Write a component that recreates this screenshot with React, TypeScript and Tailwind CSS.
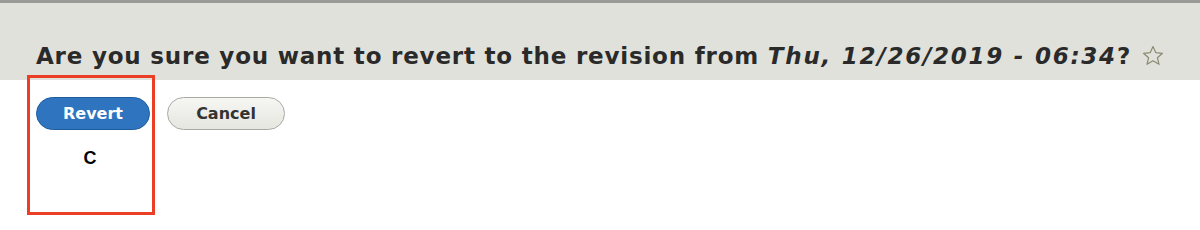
export default function App() {
  return (
    <div className="relative h-[230px] w-[1200px] overflow-hidden bg-white font-['DejaVu_Sans',sans-serif]">
      {/* Page title bar */}
      <div className="h-[80px] border-t-[3px] border-[#9a9a96] bg-[#e1e1db] px-[36px] pt-[39px]">
        <h1 className="flex items-center whitespace-nowrap text-[23px] font-bold leading-[28px] tracking-[0.8px] text-[#2a2a2a]">
          <span>
            Are you sure you want to revert to the revision from{' '}
            <em className="tracking-[1.75px]">Thu, 12/26/2019 - 06:34</em>?
          </span>
          <svg className="ml-[10px] h-[24px] w-[24px] shrink-0" viewBox="0 0 24 24" fill="none" stroke="#8a8a72" strokeWidth="1.2" strokeLinejoin="round">
            <path d="M12 2.5l2.8 6.2 6.7.6-5.1 4.4 1.6 6.6L12 16.8l-6 3.5 1.6-6.6-5.1-4.4 6.7-.6z" />
          </svg>
        </h1>
      </div>

      {/* Form actions */}
      <div className="flex gap-[17px] px-[36px] pt-[17px]">
        <button className="h-[33px] w-[114px] rounded-full border border-[#1e5c9e] bg-[#2f74bf] text-[16px] font-bold text-white">
          Revert
        </button>
        <button className="h-[33px] w-[118px] rounded-full border border-[#a8a8a4] bg-gradient-to-b from-[#f6f6f3] to-[#e6e6e0] text-[16px] font-bold text-[#333]">
          Cancel
        </button>
      </div>
      <div className="w-[144px] pl-[36px] pt-[15px] text-center font-['Liberation_Sans',sans-serif] text-[18px] font-bold text-black">
        C
      </div>

      {/* Highlight overlay */}
      <div className="absolute left-[27px] top-[75px] h-[140px] w-[128px] border-[3px] border-[#ea3f24]" />
    </div>
  );
}
